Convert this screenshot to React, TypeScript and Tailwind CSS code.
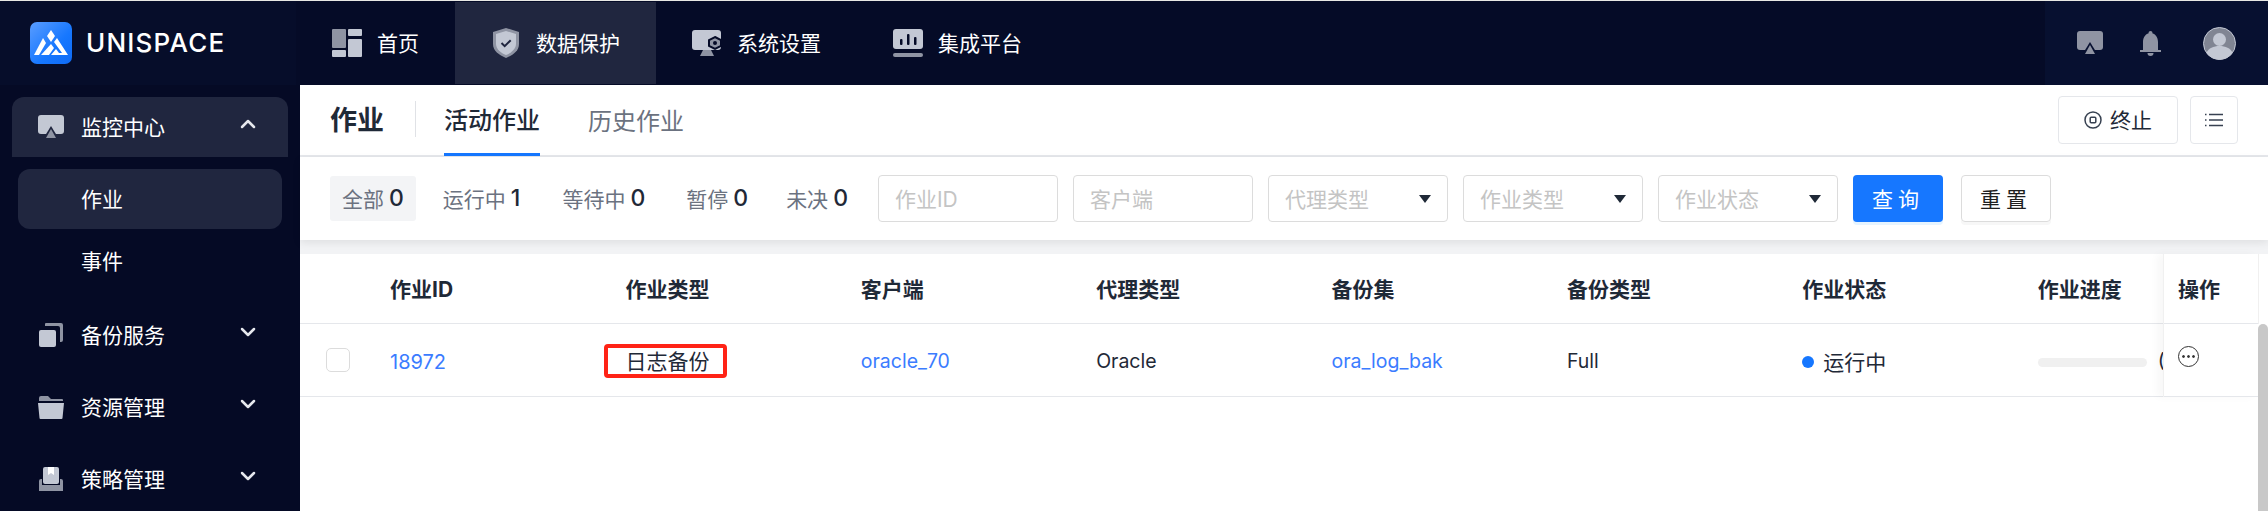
import { ChevronDown, ChevronUp } from 'lucide-react';
import type { ReactNode } from 'react';

const LIGHT = '#c3c8d4';
const DARK = '#8f94a3';

function Logo() {
  return (
    <svg width="42" height="42" viewBox="0 0 42 42" className="shrink-0">
      <defs>
        <linearGradient id="logoFill" x1="0" y1="0" x2="1" y2="1">
          <stop offset="0" stopColor="#5a9dff" />
          <stop offset="0.6" stopColor="#1677ff" />
          <stop offset="1" stopColor="#0f6bf5" />
        </linearGradient>
      </defs>
      <rect width="42" height="42" rx="7" fill="url(#logoFill)" />
      <polygon points="21,8 25,14 21,20 17,14" fill="#fff" />
      <polygon points="13,16 16,21 9,33 4,33" fill="#fff" />
      <polygon points="21,22 24,26 19,33 11,33" fill="#fff" />
      <polygon points="27,16 38,33 21,33 26,27 29,31 32,31 24,20" fill="#fff" />
    </svg>
  );
}

function HomeIcon() {
  return (
    <svg width="30" height="28" viewBox="0 0 30 28" className="shrink-0">
      <rect x="0" y="0" width="14" height="19" rx="1" fill={DARK} />
      <rect x="0" y="21" width="14" height="7" rx="1" fill={LIGHT} />
      <rect x="16" y="0" width="14" height="7" rx="1" fill={LIGHT} />
      <rect x="16" y="10" width="14" height="18" rx="1" fill={LIGHT} />
    </svg>
  );
}

function ShieldIcon() {
  return (
    <svg width="26" height="30" viewBox="0 0 26 30" className="shrink-0">
      <path d="M13 0 26 4v12c0 7-6 11-13 14C6 27 0 23 0 16V4z" fill={DARK} />
      <path d="M13 3 23 6v10c0 5-5 9-10 11C8 25 3 21 3 16V6z" fill={LIGHT} />
      <path d="m8.500 15 3.200 3.200 6-6" fill="none" stroke="#20263f" strokeWidth="2" />
    </svg>
  );
}

function SettingsIcon() {
  return (
    <svg width="30" height="26" viewBox="0 0 30 26" className="shrink-0">
      <rect x="0" y="0" width="29" height="20" rx="3" fill={LIGHT} />
      <path d="M11 20h8l3 6H8z" fill={DARK} />
      <polygon points="23,7 29,10 29,16 23,19 17,16 17,10" fill={DARK} stroke="#050b27" strokeWidth="2" />
      <circle cx="23" cy="13" r="2" fill="#050b27" />
    </svg>
  );
}

function PlatformIcon() {
  return (
    <svg width="30" height="28" viewBox="0 0 30 28" className="shrink-0">
      <rect x="0" y="0" width="30" height="20" rx="3" fill={LIGHT} />
      <rect x="0" y="24" width="30" height="4" rx="2" fill={DARK} />
      <rect x="7" y="10" width="2.500" height="6" rx="1" fill="#050b27" />
      <rect x="14" y="5" width="2.500" height="11" rx="1" fill="#050b27" />
      <rect x="21" y="8" width="2.500" height="8" rx="1" fill="#050b27" />
    </svg>
  );
}

function ScreenIcon({ body = LIGHT, tri = DARK, bg = '#20263f' }: { body?: string; tri?: string; bg?: string }) {
  return (
    <svg width="26" height="24" viewBox="0 0 26 24" className="shrink-0">
      <rect x="0" y="0" width="26" height="19" rx="3" fill={body} />
      <path d="M13 11 21 24H5z" fill={bg} />
      <path d="M13 14 18 23H8z" fill={tri} />
    </svg>
  );
}

function BackupIcon() {
  return (
    <svg width="24" height="24" viewBox="0 0 24 24" className="shrink-0">
      <path d="M7 0h15a2 2 0 0 1 2 2v15a2 2 0 0 1-2 2h-1V5a2 2 0 0 0-2-2H6V1a1 1 0 0 1 1-1z" fill={DARK} />
      <rect x="0" y="7" width="17" height="17" rx="2" fill={LIGHT} />
    </svg>
  );
}

function FolderIcon() {
  return (
    <svg width="26" height="23" viewBox="0 0 26 23" className="shrink-0">
      <path d="M1 5V2a2 2 0 0 1 2-2h7l3 3h11a1 1 0 0 1 1 1v1z" fill={DARK} />
      <path d="M0 7h26l-1.500 15a1 1 0 0 1-1 1H2.500a1 1 0 0 1-1-1z" fill={LIGHT} />
    </svg>
  );
}

function PolicyIcon() {
  return (
    <svg width="24" height="24" viewBox="0 0 24 24" className="shrink-0">
      <path d="M0 14a2 2 0 0 1 2-2h1v6h18v-6h1a2 2 0 0 1 2 2v10H0z" fill={DARK} />
      <rect x="4" y="0" width="16" height="17" rx="2" fill={LIGHT} />
      <path d="M9 0h6v8l-3-2-3 2z" fill="#fff" />
    </svg>
  );
}

function BellIcon() {
  return (
    <svg width="21" height="25" viewBox="0 0 21 25" className="shrink-0 mr-[5px]">
      <circle cx="10.500" cy="2" r="2" fill={DARK} />
      <path d="M10.500 2C15 2 18 6 18 11v8h3v2H0v-2h3v-8c0-5 3-9 7.500-9z" fill={DARK} />
      <path d="M7.500 22h6a3 3 0 0 1-6 0z" fill={DARK} />
    </svg>
  );
}

function Avatar() {
  return (
    <svg width="33" height="33" viewBox="0 0 33 33" className="shrink-0">
      <circle cx="16.500" cy="16.500" r="16" fill="#808593" stroke={LIGHT} strokeWidth="1" />
      <circle cx="16.500" cy="12.500" r="6.500" fill={LIGHT} />
      <path d="M3.500 26c2-5 7-7 13-7s11 2 13 7a16 16 0 0 1-26 0z" fill={LIGHT} />
    </svg>
  );
}

function NavItem({ icon, label, active }: { icon: ReactNode; label: string; active?: boolean }) {
  return (
    <div className={`h-[82px] px-9 flex items-center gap-[15px] text-[21px] text-white ${active ? 'bg-[#20263f]' : ''}`}>
      <div className="w-[30px] flex justify-center">{icon}</div>
      <span className="pt-[2px]">{label}</span>
    </div>
  );
}

function SideGroup({ icon, label, open }: { icon: ReactNode; label: string; open?: boolean }) {
  return (
    <div className={`h-[60px] mx-3 flex items-center pl-[26px] text-[21px] text-white ${open ? 'bg-[#20263f] rounded-t-[12px]' : ''}`}>
      <div className="w-[26px] flex justify-center">{icon}</div>
      <span className="ml-[17px] flex-1 pt-[2px]">{label}</span>
      <span className="mr-[28px] mb-[6px] text-[#e6e8ee]">
        {open ? <ChevronUp size={24} strokeWidth={2.5} /> : <ChevronDown size={24} strokeWidth={2.5} />}
      </span>
    </div>
  );
}

function Count({ label, n, active }: { label: string; n: number; active?: boolean }) {
  return (
    <div className={`h-[45px] flex items-center gap-[5px] rounded-[3px] ${active ? 'bg-[#f3f4f6] px-3' : ''}`}>
      <span className="text-[21px] text-[#6b7280] pt-[2px]">{label}</span>
      <span className="text-[23px] font-medium text-[#1f2937]">{n}</span>
    </div>
  );
}

function Field({ placeholder, select }: { placeholder: string; select?: boolean }) {
  return (
    <div className="w-[180px] h-[47px] shrink-0 border border-[#dcdcdc] rounded-[4px] pl-4 pr-4 flex items-center justify-between text-[21px] text-[#c4c4c4]">
      <span className="pt-[2px]">{placeholder}</span>
      {select && <span className="w-0 h-0 border-x-[6px] border-x-transparent border-t-[8px] border-t-[#1f2937]" />}
    </div>
  );
}

const headers = ['作业ID', '作业类型', '客户端', '代理类型', '备份集', '备份类型', '作业状态', '作业进度'];

export default function App() {
  return (
    <div className="w-[2268px] h-[511px] overflow-hidden flex flex-col bg-white [font-family:Inter,'Noto_Sans_CJK_SC',sans-serif]">
      <div className="h-px bg-[#e8e8e4] shrink-0" />

      {/* Top bar */}
      <header className="h-[84px] shrink-0 flex items-center bg-[#050b27]">
        <div className="w-[296px] h-full flex items-center pl-[30px] gap-[14px] bg-[#060d2a]">
          <Logo />
          <span className="text-white text-[26px] font-medium tracking-[1.2px] -mt-[2px]">UNISPACE</span>
        </div>
        <nav className="flex-1 flex items-center">
          <NavItem icon={<HomeIcon />} label="首页" />
          <NavItem icon={<ShieldIcon />} label="数据保护" active />
          <NavItem icon={<SettingsIcon />} label="系统设置" />
          <NavItem icon={<PlatformIcon />} label="集成平台" />
        </nav>
        <div className="w-[223px] h-full pl-8 pr-8 flex items-center justify-between bg-[#071030]">
          <ScreenIcon body={DARK} tri={DARK} bg="#071030" />
          <BellIcon />
          <Avatar />
        </div>
      </header>

      <div className="flex-1 min-h-0 flex">
        {/* Sidebar */}
        <aside className="w-[300px] shrink-0 bg-[#050a25] pt-3">
          <SideGroup icon={<ScreenIcon />} label="监控中心" open />
          <div className="mt-3 mb-[14px] flex flex-col gap-[2px] text-[21px] text-white">
            <div className="h-[60px] mx-[18px] pl-[63px] pt-[2px] flex items-center rounded-[12px] bg-[#20263f]">作业</div>
            <div className="h-[60px] mx-[18px] pl-[63px] pt-[2px] flex items-center">事件</div>
          </div>
          <div className="flex flex-col gap-3">
            <SideGroup icon={<BackupIcon />} label="备份服务" />
            <SideGroup icon={<FolderIcon />} label="资源管理" />
            <SideGroup icon={<PolicyIcon />} label="策略管理" />
          </div>
        </aside>

        <main className="flex-1 min-w-0 flex flex-col bg-[#f2f3f5]">
          {/* Tabs */}
          <div className="h-[72px] shrink-0 bg-white border-b-2 border-[#e5e7eb] pl-[30px] pr-[30px] flex items-center">
            <span className="text-[27px] font-bold text-[#1f2937] pt-[3px]">作业</span>
            <span className="w-px h-[36px] bg-[#e0e2e6] ml-[31px] mr-[28px] -mt-[3px]" />
            <div className="h-full pt-[3px] flex items-center border-b-[3px] border-[#1677ff] -mb-[2px] text-[24px] font-medium text-[#1f2937]">活动作业</div>
            <div className="ml-12 pt-[3px] text-[24px] text-[#6b7280]">历史作业</div>
            <div className="ml-auto flex items-center gap-3">
              <div className="w-[120px] h-12 border border-[#e5e7eb] rounded-[4px] flex items-center justify-center gap-2 text-[21px] text-[#1f2937]">
                <svg width="18" height="18" viewBox="0 0 18 18" fill="none" stroke="#374151">
                  <circle cx="9" cy="9" r="8" strokeWidth="1.500" />
                  <rect x="6.200" y="6.200" width="5.600" height="5.600" rx="1" strokeWidth="1.500" />
                </svg>
                <span className="pt-[2px]">终止</span>
              </div>
              <div className="w-12 h-12 border border-[#e5e7eb] rounded-[4px] flex items-center justify-center">
                <svg width="18" height="14" viewBox="0 0 18 14" fill="none" stroke="#374151" strokeWidth="1.500">
                  <path d="M4 1.500h14M4 7h14M4 12.500h14M0 1.500h1.500M0 7h1.500M0 12.500h1.500" />
                </svg>
              </div>
            </div>
          </div>

          {/* Filters */}
          <div className="h-[83px] shrink-0 bg-white pl-[30px] flex items-center shadow-[0_3px_8px_rgba(0,0,0,0.08)] relative">
            <Count label="全部" n={0} active />
            <div className="ml-[27px]"><Count label="运行中" n={1} /></div>
            <div className="ml-[42px]"><Count label="等待中" n={0} /></div>
            <div className="ml-[41px]"><Count label="暂停" n={0} /></div>
            <div className="ml-[38px]"><Count label="未决" n={0} /></div>
            <div className="ml-[30px] flex items-center gap-[15px]">
              <Field placeholder="作业ID" />
              <Field placeholder="客户端" />
              <Field placeholder="代理类型" select />
              <Field placeholder="作业类型" select />
              <Field placeholder="作业状态" select />
              <div className="w-[90px] h-[47px] pt-[2px] rounded-[4px] bg-[#1677ff] text-white text-[21px] tracking-[5px] flex items-center justify-center shadow-[0_3px_0_#e6f4ff]">查询</div>
              <div className="ml-[3px] w-[90px] h-[47px] pt-[2px] rounded-[4px] border border-[#dcdcdc] text-[#1f1f1f] text-[21px] tracking-[5px] flex items-center justify-center shadow-[0_3px_0_#f7f7f7]">重置</div>
            </div>
          </div>

          {/* Table */}
          <div className="mt-[14px] flex-1 min-h-0 bg-white flex text-[21px] text-[#1f2937]">
            <div className="flex-1 min-w-0 overflow-hidden">
              <div className="h-[70px] pt-[2px] flex items-center border-b border-[#e5e7eb] w-[2000px] font-bold">
                <div className="w-[90px] shrink-0" />
                {headers.map((h) => (
                  <div key={h} className="w-[235.4px] shrink-0">{h}</div>
                ))}
              </div>
              <div className="h-[73px] pt-[3px] flex items-center border-b border-[#e5e7eb] w-[2000px]">
                <div className="w-[90px] shrink-0 pl-[26px] mb-[3px]">
                  <div className="w-6 h-6 rounded-[5px] border border-[#dcdcdc]" />
                </div>
                <div className="w-[235.4px] shrink-0 text-[20px] text-[#3b7cff]">18972</div>
                <div className="w-[235.4px] shrink-0 relative">
                  日志备份
                  {/* red annotation */}
                  <div className="absolute left-[-21px] top-[-2px] w-[123px] h-[34px] border-[4px] border-[#ff2316] rounded-[4px]" />
                </div>
                <div className="w-[235.4px] shrink-0 text-[19.5px] text-[#3b7cff]">oracle_70</div>
                <div className="w-[235.4px] shrink-0 text-[19.5px]">Oracle</div>
                <div className="w-[235.4px] shrink-0 text-[19.5px] text-[#3b7cff]">ora_log_bak</div>
                <div className="w-[235.4px] shrink-0 text-[19.5px]">Full</div>
                <div className="w-[235.4px] shrink-0 flex items-center gap-[9px]">
                  <span className="w-3 h-3 rounded-full bg-[#1677ff]" />
                  <span className="pt-[2px]">运行中</span>
                </div>
                <div className="w-[235.4px] shrink-0 flex items-center gap-[11px]">
                  <div className="w-[109px] h-[9px] mt-[2px] rounded-full bg-[#f0f0f0]" />
                  <span className="text-[19.5px] text-[#1f2937]">(0%)</span>
                </div>
              </div>
            </div>

            {/* Fixed action column */}
            <div className="w-[95px] shrink-0 h-[143px] border-l border-[#f0f0f0] shadow-[-6px_0_8px_rgba(0,0,0,0.03)] relative bg-white">
              <div className="h-[70px] pl-[14px] pt-[2px] flex items-center border-b border-[#e5e7eb] font-bold">操作</div>
              <div className="h-[73px] pl-[14px] pb-[8px] flex items-center border-b border-[#e5e7eb]">
                <svg width="21" height="21" viewBox="0 0 21 21" fill="none" stroke="#333">
                  <circle cx="10.500" cy="10.500" r="10" />
                  <circle cx="5.500" cy="10.500" r="1" fill="#333" />
                  <circle cx="10.500" cy="10.500" r="1" fill="#333" />
                  <circle cx="15.500" cy="10.500" r="1" fill="#333" />
                </svg>
              </div>
            </div>

            {/* Scrollbar */}
            <div className="w-[10px] shrink-0 flex flex-col">
              <div className="h-[70px] border-l border-[#f0f0f0]" />
              <div className="flex-1 rounded-t-[5px] bg-[#c8c8c8]" />
            </div>
          </div>
        </main>
      </div>
    </div>
  );
}
